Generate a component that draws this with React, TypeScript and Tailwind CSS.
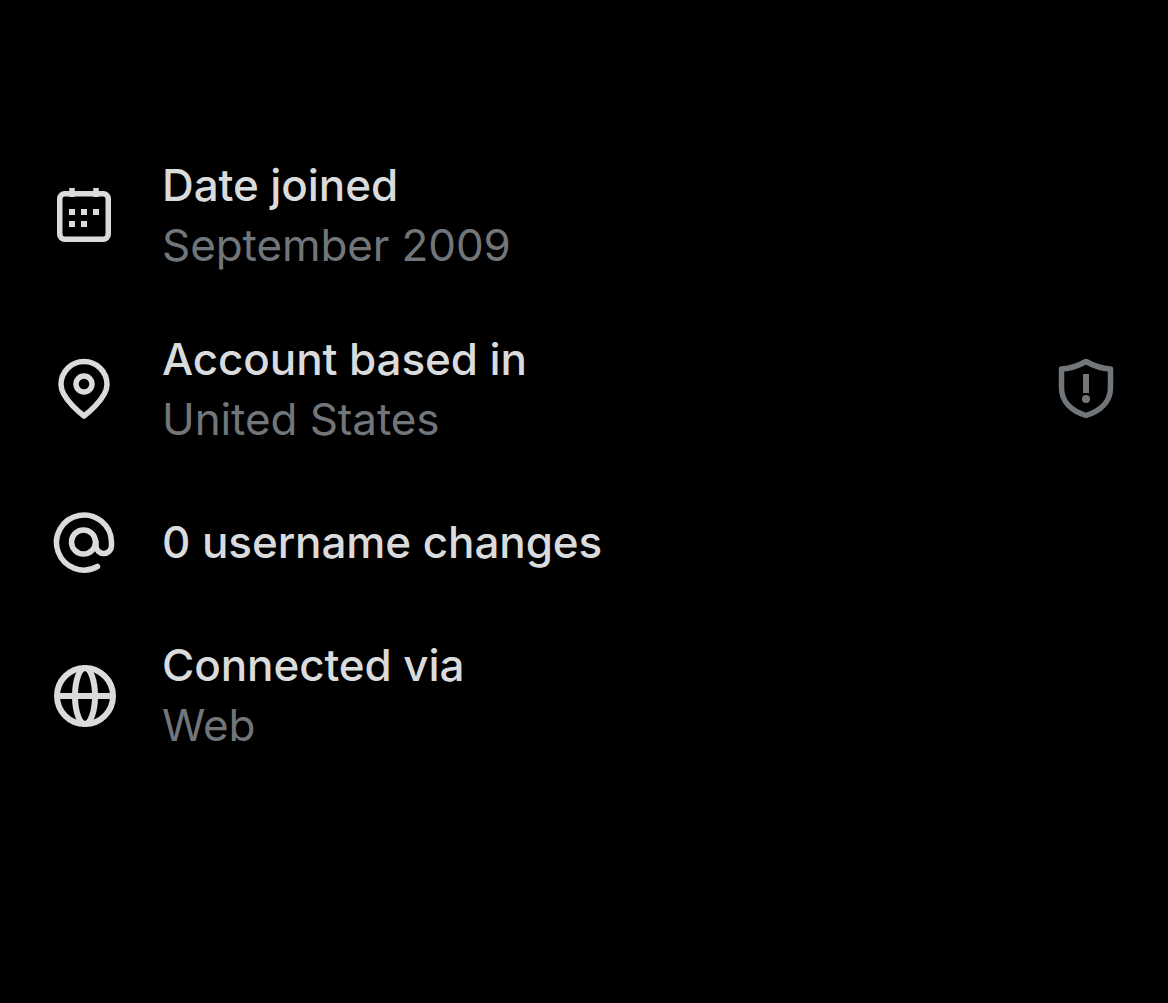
const CalendarIcon = () => (
  <svg width="64" height="64" viewBox="0 0 64 64" fill="none" stroke="currentColor" strokeWidth="5.5">
    <rect x="7.75" y="9.75" width="48.5" height="45.5" rx="5" />
    <path d="M20 4v9M44 4v9" />
    <g fill="currentColor" stroke="none">
      <rect x="17" y="25" width="6" height="6" />
      <rect x="29" y="25" width="6" height="6" />
      <rect x="41" y="25" width="6" height="6" />
      <rect x="17" y="37" width="6" height="6" />
      <rect x="29" y="37" width="6" height="6" />
    </g>
  </svg>
);

const PinIcon = () => (
  <svg width="64" height="64" viewBox="0 0 64 64" fill="none" stroke="currentColor" strokeWidth="5.5" strokeLinejoin="round">
    <path d="M32 58C32 58 9 41 9 26.5A23 23 0 0 1 55 26.5C55 41 32 58 32 58Z" />
    <circle cx="32" cy="26" r="8" />
  </svg>
);

const AtIcon = () => (
  <svg width="64" height="64" viewBox="0 0 64 64" fill="none" stroke="currentColor" strokeWidth="5.5" strokeLinecap="round">
    <path d="M45.5 55.5A27.5 27.5 0 1 1 59.5 31V34.75A7.75 7.75 0 0 1 44 34.75V31" />
    <circle cx="31.5" cy="31" r="12" />
  </svg>
);

const GlobeIcon = () => (
  <svg width="64" height="64" viewBox="0 0 64 64" fill="none" stroke="currentColor" strokeWidth="6">
    <circle cx="33" cy="32" r="28" />
    <ellipse cx="33" cy="32" rx="10" ry="28" />
    <path d="M5 32h56" />
  </svg>
);

const ShieldIcon = () => (
  <svg width="64" height="64" viewBox="0 0 64 64" fill="none" stroke="currentColor" strokeWidth="5.5" strokeLinejoin="round">
    <path d="M32 3.5C40 8 48 10.5 56.5 11V30C56.5 44 46 53 32 57.5C18 53 7.5 44 7.5 30V11C16 10.5 24 8 32 3.5Z" />
    <rect x="29" y="16" width="6" height="19" fill="currentColor" stroke="none" />
    <circle cx="32" cy="41" r="4" fill="currentColor" stroke="none" />
  </svg>
);

const rows = [
  { id: "joined", icon: <CalendarIcon />, title: "Date joined", sub: "September 2009", gap: "mt-[155px]" },
  { id: "based", icon: <PinIcon />, title: "Account based in", sub: "United States", gap: "mt-[52px]", flag: true },
  { id: "username", icon: <AtIcon />, title: "0 username changes", gap: "mt-[60px]" },
  { id: "connected", icon: <GlobeIcon />, title: "Connected via", sub: "Web", gap: "mt-[60px]" },
];

export default function App() {
  return (
    <div className="h-[1003px] w-[1168px] overflow-hidden bg-black pl-[52px] pr-[50px] font-['Inter',sans-serif] text-[44px] leading-[60px] tracking-[-0.1px]">
      <div className="flex flex-col">
        {rows.map((row) => (
          <div key={row.id} className={`flex items-center ${row.gap}`}>
            <div className="text-[#dadbdc]">{row.icon}</div>
            <div className="ml-[46px] flex-1 pb-[2px]">
              <div className="font-medium text-[#dadbdc]">{row.title}</div>
              {row.sub && <div className="text-[#71767b]">{row.sub}</div>}
            </div>
            {row.flag && (
              <div className="text-[#71767b]">
                <ShieldIcon />
              </div>
            )}
          </div>
        ))}
      </div>
    </div>
  );
}
